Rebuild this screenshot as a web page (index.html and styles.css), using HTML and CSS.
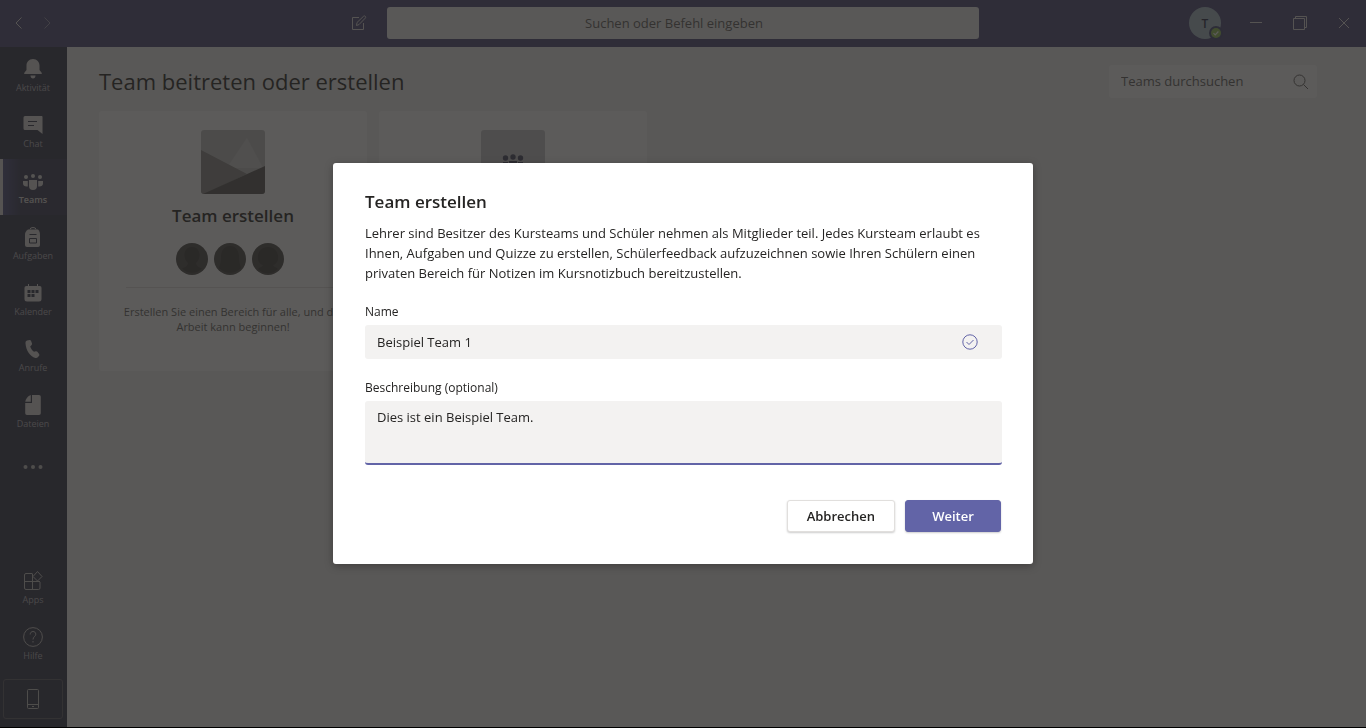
FILE: index.html
```html
<!DOCTYPE html>
<html lang="de">
<head>
    <meta charset="UTF-8">
    <meta name="viewport" content="width=device-width, initial-scale=1.0">
    <title>Team erstellen</title>
    <link rel="stylesheet" href="styles.css">
</head>
<body>
    <div class="app">
        <header class="topbar">
            <div class="topbar-left">
                <div class="history">
                    <button class="icon-btn" aria-label="Zurück">
                        <svg width="8" height="14" viewBox="0 0 8 14"><path d="M6.500 1.500L1 7l5.500 5.500" class="line"/></svg>
                    </button>
                    <button class="icon-btn dim" aria-label="Vorwärts">
                        <svg width="8" height="14" viewBox="0 0 8 14"><path d="M1.500 1.500L7 7l-5.500 5.500" class="line"/></svg>
                    </button>
                </div>
                <button class="icon-btn" aria-label="Neuer Chat">
                    <svg width="16" height="16" viewBox="0 0 16 16">
                        <path d="M8 2.500H1.500v12h11V8" class="line"/>
                        <path d="M5.500 10.500l.5-3L12.500 1.300c.6-.6 1.400-.4 1.800 0 .5.5.6 1.200 0 1.800L8 9.600z" class="line"/>
                    </svg>
                </button>
            </div>
            <input type="text" class="command" placeholder="Suchen oder Befehl eingeben" aria-label="Suchen oder Befehl eingeben">
            <div class="topbar-right">
                <button class="me" aria-label="Profil">T
                    <svg class="presence" width="14" height="14" viewBox="0 0 14 14">
                        <circle cx="7" cy="7" r="7" fill="#464775"/>
                        <circle cx="7" cy="7" r="5" fill="#92c353"/>
                        <path d="M4.500 7.200l1.700 1.700 3.200-3.400" fill="none" stroke="#fff" stroke-width="1.200"/>
                    </svg>
                </button>
                <button class="win-btn" aria-label="Minimieren">
                    <svg width="12" height="14" viewBox="0 0 12 14"><path d="M0 6.500h12" class="line"/></svg>
                </button>
                <button class="win-btn" aria-label="Verkleinern">
                    <svg width="14" height="14" viewBox="0 0 14 14"><path d="M.5 2.500h11v11H.5zM2.500 2V.5h11v11H12" class="line"/></svg>
                </button>
                <button class="win-btn" aria-label="Schließen">
                    <svg width="12" height="12" viewBox="0 0 12 12"><path d="M1 1l10 10M11 1L1 11" class="line"/></svg>
                </button>
            </div>
        </header>

        <div class="body">
            <nav class="rail">
                <a href="#" class="rail-item">
                    <svg width="20" height="20" viewBox="0 0 20 20"><path d="M10 0C6 0 3.500 3 3.500 6.500V11l-2 2.500c-.7 1-.3 1.500.5 1.500h16c.8 0 1.200-.5.5-1.500l-2-2.500V6.500C16.500 3 14 0 10 0zM7.500 16.500h5c0 1.800-1 3-2.500 3s-2.500-1.200-2.500-3z"/></svg>
                    <span>Aktivität</span>
                </a>
                <a href="#" class="rail-item">
                    <svg width="20" height="20" viewBox="0 0 20 20"><path d="M2 1h16.500c.6 0 1 .4 1 1v17l-5-4H2a1.500 1.500 0 0 1-1.500-1.500v-11A1.500 1.500 0 0 1 2 1z"/><path d="M5 6.500h9M5 10.500h6" class="cut"/></svg>
                    <span>Chat</span>
                </a>
                <a href="#" class="rail-item active">
                    <svg width="20" height="20" viewBox="0 0 20 20"><circle cx="3" cy="6" r="2"/><circle cx="10" cy="5" r="2"/><circle cx="17" cy="6" r="2"/><path d="M6 9h8v6a4 4 0 0 1-8 0zM0 10h4.800v5.500C2 16 0 14.500 0 12.500zM20 10h-4.800v5.500c2.800.5 4.800-1 4.800-3z"/></svg>
                    <span>Teams</span>
                </a>
                <a href="#" class="rail-item">
                    <svg width="20" height="20" viewBox="0 0 20 20"><path d="M5 2.500h10c1.300 1 2 3 2 5V18a2 2 0 0 1-2 2H4a2 2 0 0 1-2-2V7.500c0-2 1.200-4 3-5z"/><path d="M7 2.500a3 2 0 0 1 6 0" class="line"/><path d="M6.500 7.500h7M6.500 11.500h7v4.500h-7z" class="cut"/></svg>
                    <span>Aufgaben</span>
                </a>
                <a href="#" class="rail-item">
                    <svg width="20" height="20" viewBox="0 0 20 20"><path d="M5 1h1v2h8V1h1v2h1.500A1.800 1.800 0 0 1 18.500 4.800V16a2.500 2.500 0 0 1-2.500 2.500H4A2.500 2.500 0 0 1 1.500 16V4.800A1.800 1.800 0 0 1 3.300 3H5z"/><path d="M4.500 7h3v3h-3zM8.500 7h3v3h-3zM12.500 7h3v3h-3zM4.500 11h3v3h-3zM8.500 11h3v3h-3z" class="hole"/></svg>
                    <span>Kalender</span>
                </a>
                <a href="#" class="rail-item">
                    <svg width="20" height="20" viewBox="0 0 20 20"><path d="M4 1.500L6.500 1c.7-.1 1.200.2 1.500.8l1 2.700c.2.600 0 1.200-.4 1.600L7.200 7.500c.7 2.200 2 4 3.800 5.300l1.800-.5c.6-.2 1.200 0 1.600.5l1.700 2.200c.4.600.4 1.200 0 1.700l-1.300 1.600c-.6.700-1.500 1-2.400.7C7 17.500 3 11.500 2.500 4.500c-.1-1.500.3-2.700 1.500-3z"/></svg>
                    <span>Anrufe</span>
                </a>
                <a href="#" class="rail-item">
                    <svg width="20" height="20" viewBox="0 0 20 20"><path d="M9 0h7a1.800 1.800 0 0 1 1.800 1.800v16.400A1.800 1.800 0 0 1 16 20H4a1.800 1.800 0 0 1-1.800-1.800V8H9zM7.800 0v6.800H2.300C2.500 4 5 1 7.800 0z"/></svg>
                    <span>Dateien</span>
                </a>
                <button class="rail-item more" aria-label="Weitere Apps">
                    <svg width="20" height="20" viewBox="0 0 20 20"><circle cx="2.500" cy="10" r="2"/><circle cx="10" cy="10" r="2"/><circle cx="17.500" cy="10" r="2"/></svg>
                </button>

                <div class="rail-bottom">
                    <a href="#" class="rail-item">
                        <svg width="20" height="20" viewBox="0 0 20 20"><path d="M9 2.500H3A1.500 1.500 0 0 0 1.500 4v13A1.500 1.500 0 0 0 3 18.500h12.500A1.500 1.500 0 0 0 17 17v-6M1.500 10.500H17M9.500 2.500v16M14.500 .5L19 5.500 14.500 10 10 5.500z" class="line"/></svg>
                        <span>Apps</span>
                    </a>
                    <a href="#" class="rail-item">
                        <svg width="20" height="20" viewBox="0 0 20 20"><circle cx="10" cy="10" r="9.400" class="line"/><path d="M7.200 7.500C7.200 5.500 8.500 4.500 10 4.500s2.800 1 2.800 2.700c0 2.300-2.800 2.500-2.800 5.300M10 14v1.500" class="line"/></svg>
                        <span>Hilfe</span>
                    </a>
                    <button class="mobile" aria-label="Mobile App">
                        <svg width="12" height="20" viewBox="0 0 12 20"><path d="M1.500.5h9a1 1 0 0 1 1 1v17a1 1 0 0 1-1 1h-9a1 1 0 0 1-1-1v-17a1 1 0 0 1 1-1zM.5 15.500h11M5 17.500h2" class="line"/></svg>
                    </button>
                </div>
            </nav>

            <main class="content">
                <div class="content-head">
                    <h1>Team beitreten oder erstellen</h1>
                    <div class="team-search">
                        <input type="text" placeholder="Teams durchsuchen" aria-label="Teams durchsuchen">
                        <svg width="16" height="16" viewBox="0 0 16 16"><circle cx="6.500" cy="6.500" r="5.500" class="line"/><path d="M10.500 10.500l4.500 4.500" class="line"/></svg>
                    </div>
                </div>
                <div class="cards">
                    <section class="card">
                        <svg class="card-img" width="64" height="64" viewBox="0 0 64 64">
                            <path d="M0 0h64v64H0z" fill="#c0c0c0"/>
                            <path d="M46 8L26 38h36z" fill="#cfcfcf"/>
                            <path d="M0 20l46 24L4 64H0z" fill="#8a8886"/>
                            <path d="M64 36v28H2z" fill="#575553"/>
                        </svg>
                        <h2>Team erstellen</h2>
                        <div class="faces">
                            <svg width="32" height="32" viewBox="0 0 32 32"><circle cx="16" cy="16" r="16" fill="#4a4846"/><path d="M16 4c-5 0-8 4-7.500 9 .4 4 2.500 6 3.500 7-.5 4-3 4-6 5.500a14 14 0 0 0 20 0c-3-1.500-5.500-1.500-6-5.500 1-1 3.100-3 3.500-7 .5-5-2.500-9-7.500-9z" fill="#3a3836"/></svg>
                            <svg width="32" height="32" viewBox="0 0 32 32"><circle cx="16" cy="16" r="16" fill="#4a4846"/><path d="M16 3C10 3 7 8 7 14c0 5-1 8-2 11a15 15 0 0 0 22 0c-1-3-2-6-2-11 0-6-3-11-9-11z" fill="#3a3836"/></svg>
                            <svg width="32" height="32" viewBox="0 0 32 32"><circle cx="16" cy="16" r="16" fill="#4a4846"/><path d="M16 4C9 4 5 10 6 16c.7 4 3 5.500 5 6-.5 2-3 2-5 4a14 14 0 0 0 20 0c-2-2-4.500-2-5-4 2-.5 4.300-2 5-6 1-6-3-12-10-12z" fill="#3a3836"/></svg>
                        </div>
                        <hr>
                        <p>Erstellen Sie einen Bereich für alle, und die Arbeit kann beginnen!</p>
                    </section>
                    <section class="card">
                        <svg class="card-img" width="64" height="64" viewBox="0 0 64 64">
                            <path d="M0 0h64v64H0z" fill="#c8c8cc"/>
                            <g fill="#464760"><circle cx="24.500" cy="28" r="2.700"/><circle cx="32" cy="27" r="2.700"/><circle cx="39.500" cy="28" r="2.700"/><path d="M28 31h8v6a4 4 0 0 1-8 0zM22 32h5v6c-3 0-5-1-5-3zM42 32h-5v6c3 0 5-1 5-3z"/></g>
                        </svg>
                    </section>
                </div>
            </main>
        </div>
    </div>

    <div class="overlay">
        <form class="dialog" role="dialog" aria-labelledby="dialog-title">
            <h2 id="dialog-title">Team erstellen</h2>
            <p>Lehrer sind Besitzer des Kursteams und Schüler nehmen als Mitglieder teil. Jedes Kursteam erlaubt es Ihnen, Aufgaben und Quizze zu erstellen, Schülerfeedback aufzuzeichnen sowie Ihren Schülern einen privaten Bereich für Notizen im Kursnotizbuch bereitzustellen.</p>

            <label for="team-name">Name</label>
            <div class="field">
                <input type="text" id="team-name" value="Beispiel Team 1">
                <svg width="16" height="16" viewBox="0 0 16 16"><circle cx="8" cy="8" r="7.200" class="line"/><path d="M4.500 8l2.500 2.500L11.500 6" class="line"/></svg>
            </div>

            <label for="team-desc">Beschreibung (optional)</label>
            <textarea id="team-desc">Dies ist ein Beispiel Team.</textarea>

            <div class="actions">
                <button type="button" class="btn">Abbrechen</button>
                <button type="button" class="btn primary">Weiter</button>
            </div>
        </form>
    </div>
</body>
</html>
```
FILE: styles.css
```css
* {
    box-sizing: border-box;
}

body {
    margin: 0;
    background: #000;
    color: #252423;
    font-family: "Segoe UI", "Open Sans", "Noto Sans", sans-serif;
    font-size: 13px;
}

h1, h2, p {
    margin: 0;
}

button, input, textarea {
    font: inherit;
    color: inherit;
    border: none;
    background: none;
    padding: 0;
}

svg {
    display: block;
    fill: currentColor;
}

.line {
    fill: none;
    stroke: currentColor;
}

.app {
    height: calc(100vh - 1px);
    display: flex;
    flex-direction: column;
}

/* Title bar */
.topbar {
    height: 47px;
    flex-shrink: 0;
    display: grid;
    grid-template-columns: 1fr minmax(0, 592px) 1fr;
    align-items: center;
    padding-bottom: 1px;
    background: #4c4777;
    color: #e1dfdd;
}

.topbar-left {
    display: flex;
    justify-content: space-between;
    padding: 0 20px 0 15px;
}

.history {
    display: flex;
    gap: 20px;
}

.icon-btn {
    display: flex;
    align-items: center;
}

.dim {
    opacity: 0.5;
}

.command {
    width: 100%;
    height: 32px;
    padding-right: 18px;
    border-radius: 3px;
    background: #f3f2f1;
    text-align: center;
}

.command::placeholder {
    color: #605e5c;
    opacity: 1;
}

.topbar-right {
    display: flex;
    justify-content: flex-end;
    align-items: center;
}

.me {
    position: relative;
    width: 32px;
    height: 32px;
    margin-right: 13px;
    border-radius: 50%;
    background: #a6bcc8;
    color: #252440;
    font-size: 12px;
    font-weight: 600;
}

.presence {
    position: absolute;
    right: -2px;
    bottom: -1px;
}

.win-btn {
    width: 44px;
    height: 32px;
    display: flex;
    justify-content: center;
    align-items: center;
}

.body {
    flex: 1;
    min-height: 0;
    display: flex;
}

/* App rail */
.rail {
    width: 67px;
    flex-shrink: 0;
    display: flex;
    flex-direction: column;
    background: #33344a;
}

.rail-item {
    height: 56px;
    padding: 12px 1px 0 0;
    display: flex;
    flex-direction: column;
    align-items: center;
    gap: 2px;
    color: #e1dfdd;
    text-decoration: none;
    font-size: 9px;
    line-height: 14px;
}

.rail-item span {
    color: #b5b3bc;
}

.rail-item.active {
    background: linear-gradient(to right, #50508a, #3a3b56 30%);
    box-shadow: inset 3px 0 #e1dfdd;
}

.rail-item.active span {
    color: #e1dfdd;
    font-weight: 600;
}

.rail-item.more {
    padding-top: 18px;
    color: #c8c6c4;
}

.cut {
    fill: none;
    stroke: #33344a;
}

.hole {
    fill: #33344a;
}

.rail-bottom {
    margin-top: auto;
    padding-bottom: 8px;
}

.rail-bottom .rail-item {
    color: #c8c6c4;
}

.mobile {
    width: 60px;
    height: 40px;
    margin: 8px 0 0 3px;
    display: flex;
    justify-content: center;
    align-items: center;
    border: 1px solid #5c5b66;
    border-radius: 3px;
    color: #c8c6c4;
}

/* Page behind the dialog */
.content {
    flex: 1;
    padding: 18px 49px 0 32px;
    background: #f3f2f1;
}

.content-head {
    display: flex;
    justify-content: space-between;
    margin-bottom: 13px;
}

h1 {
    font-size: 22px;
    font-weight: 400;
    line-height: 32px;
}

.team-search {
    width: 208px;
    height: 33px;
    display: flex;
    align-items: center;
    padding: 0 8px 0 12px;
    border-radius: 3px;
    background: #fff;
    color: #605e5c;
}

.team-search input {
    flex: 1;
    min-width: 0;
    padding-bottom: 2px;
}

.team-search input::placeholder {
    color: #605e5c;
    opacity: 1;
}

.cards {
    display: flex;
    gap: 12px;
}

.card {
    width: 268px;
    height: 260px;
    padding: 19px 20px;
    border-radius: 3px;
    background: #fff;
    text-align: center;
}

.card-img {
    margin: 0 auto;
    border-radius: 3px;
}

.card h2 {
    margin-top: 10px;
    font-size: 17px;
    font-weight: 600;
    line-height: 24px;
}

.faces {
    display: flex;
    justify-content: center;
    gap: 6px;
    margin: 15px 6px 0 0;
}

.card hr {
    height: 1px;
    margin: 12px 7px 16px;
    border: none;
    background: #e1dfdd;
}

.card p {
    color: #605e5c;
    font-size: 11px;
    line-height: 15px;
}

/* Dialog */
.overlay {
    position: fixed;
    inset: 0 0 1px;
    display: flex;
    justify-content: center;
    align-items: center;
    background: rgba(37, 36, 35, 0.75);
}

.dialog {
    width: 700px;
    max-width: 100%;
    padding: 27px 31px 32px 32px;
    border-radius: 3px;
    background: #fff;
    box-shadow: 0 2px 8px rgba(0, 0, 0, 0.3);
}

.dialog h2 {
    margin-bottom: 9px;
    font-size: 17px;
    font-weight: 600;
    line-height: 24px;
}

.dialog p {
    margin-bottom: 19px;
    line-height: 20px;
}

.dialog label {
    display: block;
    margin-bottom: 4px;
    font-size: 12px;
    line-height: 19px;
}

.field {
    display: flex;
    align-items: center;
    height: 34px;
    margin-bottom: 19px;
    padding: 0 24px 1px 12px;
    border-radius: 3px;
    background: #f3f2f1;
    color: #6264a7;
}

.field input {
    flex: 1;
    color: #252423;
}

textarea {
    display: block;
    width: 100%;
    height: 64px;
    padding: 6px 12px;
    border-bottom: 2px solid #6264a7;
    border-radius: 3px;
    background: #f3f2f1;
    line-height: 20px;
    resize: none;
}

.actions {
    display: flex;
    justify-content: flex-end;
    gap: 10px;
    margin-top: 35px;
    padding-right: 1px;
}

.btn {
    min-width: 96px;
    height: 32px;
    padding: 0 19px;
    border: 1px solid #e1dfdd;
    border-radius: 3px;
    background: #fff;
    box-shadow: 0 1px 2px rgba(0, 0, 0, 0.2);
    font-weight: 600;
}

.btn.primary {
    border-color: #6264a7;
    background: #6264a7;
    color: #fff;
}
```
